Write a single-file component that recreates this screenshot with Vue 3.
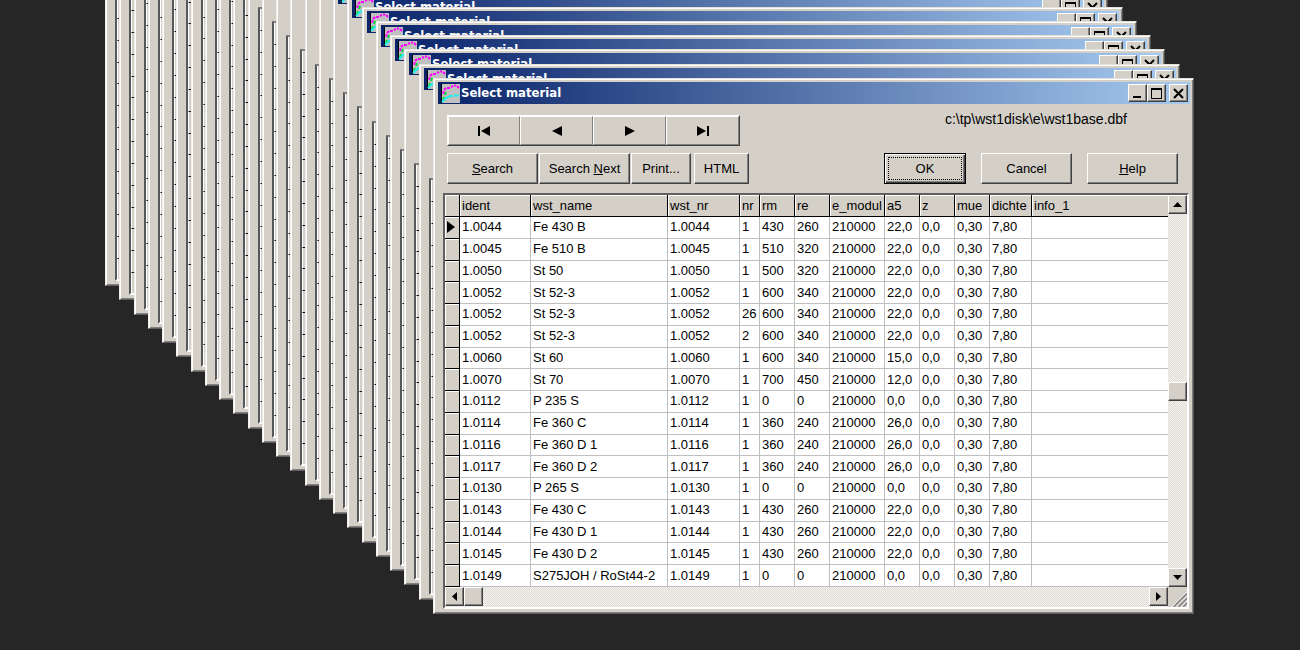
<script setup>
const STEP = 14.26
const cascade = Array.from({ length: 24 }, (_, i) => {
  const depth = 23 - i
  return { depth, shift: -Math.round(depth * STEP) }
})

const columns = [
  { key: 'ident', cls: 'c-ident' },
  { key: 'wst_name', cls: 'c-name' },
  { key: 'wst_nr', cls: 'c-wstnr' },
  { key: 'nr', cls: 'c-nr' },
  { key: 'rm', cls: 'c-num' },
  { key: 're', cls: 'c-num' },
  { key: 'e_modul', cls: 'c-modul' },
  { key: 'a5', cls: 'c-num' },
  { key: 'z', cls: 'c-num' },
  { key: 'mue', cls: 'c-num' },
  { key: 'dichte', cls: 'c-dichte' },
  { key: 'info_1', cls: 'c-info' },
]

const rows = [
  ['1.0044', 'Fe 430 B', '1', '430', '260', '22,0'],
  ['1.0045', 'Fe 510 B', '1', '510', '320', '22,0'],
  ['1.0050', 'St 50', '1', '500', '320', '22,0'],
  ['1.0052', 'St 52-3', '1', '600', '340', '22,0'],
  ['1.0052', 'St 52-3', '26', '600', '340', '22,0'],
  ['1.0052', 'St 52-3', '2', '600', '340', '22,0'],
  ['1.0060', 'St 60', '1', '600', '340', '15,0'],
  ['1.0070', 'St 70', '1', '700', '450', '12,0'],
  ['1.0112', 'P 235 S', '1', '0', '0', '0,0'],
  ['1.0114', 'Fe 360 C', '1', '360', '240', '26,0'],
  ['1.0116', 'Fe 360 D 1', '1', '360', '240', '26,0'],
  ['1.0117', 'Fe 360 D 2', '1', '360', '240', '26,0'],
  ['1.0130', 'P 265 S', '1', '0', '0', '0,0'],
  ['1.0143', 'Fe 430 C', '1', '430', '260', '22,0'],
  ['1.0144', 'Fe 430 D 1', '1', '430', '260', '22,0'],
  ['1.0145', 'Fe 430 D 2', '1', '430', '260', '22,0'],
  ['1.0149', 'S275JOH / RoSt44-2', '1', '0', '0', '0,0'],
].map(([id, name, nr, rm, re, a5]) => [id, name, id, nr, rm, re, '210000', a5, '0,0', '0,30', '7,80', ''])
</script>

<template>
  <main class="desktop">
    <div class="stack">
      <section
        v-for="w in cascade"
        :key="w.depth"
        class="window"
        :class="w.depth ? 'rear' : 'front'"
        :style="{ transform: `translate(${w.shift}px, ${w.shift}px)` }"
      >
        <header class="titlebar">
          <svg v-if="w.depth < 8" class="app-icon" viewBox="0 0 19 19" aria-hidden="true">
            <rect width="19" height="19" fill="#c0c0c0" />
            <path d="M0.5 0V19" stroke="#000" />
            <path d="M2.500 10V7M3 6L5 4M6 4H9M10 3L12 2M13 1.500H15M16 2L18 4" stroke="#f0f" stroke-width="2" fill="none" />
            <path d="M2 16L3 13M4 11L5 8" stroke="#0d3" stroke-width="2" fill="none" />
            <path d="M1 18L5 14L9 12H12M13 11.500H18" stroke="#2ee" stroke-width="2" fill="none" />
          </svg>
          <template v-if="w.depth < 7">
            <span class="title">Select material</span>
            <button class="cap" type="button" aria-label="Minimize">
              <svg viewBox="0 0 17 17"><path d="M4 12H12" stroke="#000" stroke-width="2" /></svg>
            </button>
            <button class="cap" type="button" aria-label="Maximize">
              <svg viewBox="0 0 17 17"><path d="M3 4H14M3.500 3V14M13.500 3V14M3 13.500H14" stroke="#000" fill="none" /><path d="M3 4H14" stroke="#000" stroke-width="2" /></svg>
            </button>
            <button class="cap close" type="button" aria-label="Close">
              <svg viewBox="0 0 17 17"><path d="M4 4L13 13M13 4L4 13" stroke="#000" stroke-width="2" /></svg>
            </button>
          </template>
        </header>

        <div v-if="w.depth" class="strip"><i v-for="n in 19" :key="n"></i></div>

        <div v-else class="body">
          <div class="row top-row">
            <nav class="navigator" aria-label="Records">
              <button type="button" aria-label="First"><svg viewBox="0 0 14 10"><path d="M1 0H3V10H1ZM13 0V10L4 5Z" /></svg></button>
              <button type="button" aria-label="Previous"><svg viewBox="0 0 14 10"><path d="M12 0V10L2 5Z" /></svg></button>
              <button type="button" aria-label="Next"><svg viewBox="0 0 14 10"><path d="M2 0V10L12 5Z" /></svg></button>
              <button type="button" aria-label="Last"><svg viewBox="0 0 14 10"><path d="M1 0V10L10 5ZM11 0H13V10H11Z" /></svg></button>
            </nav>
            <span class="path">c:\tp\wst1disk\e\wst1base.dbf</span>
          </div>

          <div class="row buttons">
            <button class="btn wide" type="button"><span><u>S</u>earch</span></button>
            <button class="btn wide" type="button"><span>Search <u>N</u>ext</span></button>
            <button class="btn print" type="button">Print...</button>
            <button class="btn html" type="button">HTML</button>
            <div class="dialog-buttons">
              <button class="btn ok" type="button"><span class="focus">OK</span></button>
              <button class="btn wide" type="button">Cancel</button>
              <button class="btn wide" type="button"><span><u>H</u>elp</span></button>
            </div>
          </div>

          <div class="grid">
            <table>
              <thead>
                <tr>
                  <th class="ind" aria-label="Current record"></th>
                  <th v-for="c in columns" :key="c.key" :class="c.cls" scope="col">{{ c.key }}</th>
                </tr>
              </thead>
              <tbody>
                <tr v-for="(r, i) in rows" :key="i">
                  <td class="ind"><svg v-if="i === 0" viewBox="0 0 8 12"><path d="M0 0V12L8 6Z" /></svg></td>
                  <td v-for="(v, j) in r" :key="j">{{ v }}</td>
                </tr>
              </tbody>
            </table>
            <div class="scroll vertical">
              <button type="button" aria-label="Scroll up"><svg viewBox="0 0 9 9"><path d="M0 7H9L4.500 2Z" /></svg></button>
              <div class="space"></div>
              <div class="thumb"></div>
              <div class="space"></div>
              <button type="button" aria-label="Scroll down"><svg viewBox="0 0 9 9"><path d="M0 2H9L4.500 7Z" /></svg></button>
            </div>
            <div class="scroll horizontal">
              <button type="button" aria-label="Scroll left"><svg viewBox="0 0 9 9"><path d="M7 0V9L2 4.500Z" /></svg></button>
              <div class="thumb"></div>
              <div class="space"></div>
              <button type="button" aria-label="Scroll right"><svg viewBox="0 0 9 9"><path d="M2 0V9L7 4.500Z" /></svg></button>
            </div>
            <svg class="grip" viewBox="0 0 20 20" aria-hidden="true">
              <path d="M6 20L20 6M11 20L20 11M16 20L20 16" stroke="#808080" stroke-width="2" />
              <path d="M4.500 20L20 4.500M9.500 20L20 9.500M14.500 20L20 14.500" stroke="#fff" />
            </svg>
          </div>
        </div>
      </section>
    </div>
  </main>
</template>

<style>
html,
body {
  background: #262626;
}
</style>

<style scoped>
* {
  box-sizing: border-box;
}
.desktop {
  min-height: 100vh;
  padding: 78px 106px 36px 433px;
  overflow: hidden;
  background: #262626;
  color: #000;
  font: 13px/16px "Liberation Sans", Arial, sans-serif;
}
.stack {
  position: relative;
}
.window {
  display: flex;
  flex-direction: column;
  padding: 2px 2px 3px 3px;
  background: #d4d0c8;
  border: 1px solid;
  border-color: #e4e1da #505050 #606060 #f0eeea;
  box-shadow: inset 1px 1px 0 #fff, inset -1px -1px 0 #808080;
}
.front {
  position: relative;
}
.rear {
  position: absolute;
  inset: 0;
}
.titlebar {
  display: flex;
  align-items: center;
  flex: none;
  height: 22px;
  margin: 1px 1px 0;
  padding: 0 2px 0 3px;
  background: linear-gradient(90deg, #0a246a, #a6caf0);
}
.app-icon {
  width: 19px;
  height: 19px;
}
.title {
  flex: 1;
  padding-left: 1px;
  color: #fff;
  font: bold 13px/18px "DejaVu Sans Condensed", "DejaVu Sans", sans-serif;
  white-space: nowrap;
}
button {
  display: flex;
  align-items: center;
  justify-content: center;
  padding: 0;
  background: #d4d0c8;
  border: 1px solid;
  border-color: #fff #404040 #404040 #fff;
  border-radius: 0;
  box-shadow: inset -1px -1px 0 #808080;
  color: #000;
  font: inherit;
}
.cap {
  width: 19px;
  height: 18px;
}
.cap svg {
  width: 17px;
  height: 17px;
}
.close {
  margin-left: 3px;
}
.strip {
  display: grid;
  flex: 1;
  grid-template-rows: repeat(18, 1fr) 20px;
  margin: 88px 3px 1px 6px;
  border: 2px solid;
  border-color: #808080 #fff #fff #55585a;
  background: #d4d0c8;
}
.strip i {
  border-bottom: 1px solid #111;
  border-left: 1px solid #fff;
}
.strip i:last-child {
  border-bottom: 0;
}
.body {
  padding: 11px 2px 1px 6px;
}
.row {
  display: flex;
}
.top-row {
  justify-content: space-between;
  align-items: flex-start;
  padding: 0 62px 0 4px;
}
.navigator {
  display: flex;
  border: 1px solid;
  border-color: #fff #404040 #404040 #fff;
}
.navigator button {
  width: 73px;
  height: 29px;
  border-color: #fff #808080 #808080 #fff;
  box-shadow: none;
}
.navigator button:first-child {
  width: 72px;
}
.navigator svg {
  width: 14px;
  height: 10px;
}
.path {
  margin-top: -4px;
  font-size: 14px;
}
.buttons {
  margin-top: 7px;
  padding: 0 11px 0 4px;
}
.btn {
  height: 31px;
}
.wide {
  width: 91px;
}
.buttons > .wide + .wide {
  margin-left: 1px;
}
.print {
  width: 60px;
  margin-left: 1px;
}
.html {
  width: 55px;
  margin-left: 3px;
}
.dialog-buttons {
  display: flex;
  gap: 15px;
  margin-left: auto;
}
.ok {
  width: 82px;
  padding: 3px;
  border-color: #000;
  box-shadow: inset 1px 1px 0 #fff, inset -1px -1px 0 #404040, inset -2px -2px 0 #808080;
}
.focus {
  flex: 1;
  align-self: stretch;
  display: flex;
  align-items: center;
  justify-content: center;
  border: 1px dotted #000;
}
.grid {
  display: grid;
  grid-template-columns: 1fr 19px;
  grid-template-rows: auto 20px;
  margin-top: 9px;
  border: 2px solid;
  border-color: #606060 #fff #fff #606060;
}
table {
  width: 100%;
  height: 392px;
  table-layout: fixed;
  border-collapse: separate;
  border-spacing: 0;
  background: #fff;
}
th,
td {
  padding: 0 0 0 2px;
  border-right: 1px solid #c0c0c0;
  border-bottom: 1px solid #c0c0c0;
  font-weight: normal;
  text-align: left;
  white-space: nowrap;
  overflow: hidden;
}
th {
  height: 22px;
  background: #d4d0c8;
  border-color: #000;
  box-shadow: inset 1px 1px 0 #fff;
}
th:last-child,
td:last-child {
  border-right: 0;
}
.ind {
  width: 15px;
  background: #d4d0c8;
  border-color: #000;
  box-shadow: inset 1px 1px 0 #fff;
}
.ind svg {
  display: block;
  width: 8px;
  height: 12px;
}
.c-ident { width: 71px; }
.c-name { width: 137px; }
.c-wstnr { width: 72px; }
.c-nr { width: 20px; }
.c-num { width: 35px; }
.c-modul { width: 55px; }
.c-dichte { width: 42px; }
.scroll {
  display: flex;
  background: repeating-conic-gradient(#f4f2ef 0 25%, #dfdcd6 0 50%) 0 0 / 2px 2px;
}
.vertical {
  flex-direction: column;
}
.scroll button,
.thumb {
  flex: none;
  width: 19px;
  height: 19px;
}
.thumb {
  background: #d4d0c8;
  border: 1px solid;
  border-color: #fff #404040 #404040 #fff;
  box-shadow: inset -1px -1px 0 #808080;
}
.scroll svg {
  width: 9px;
  height: 9px;
}
.space {
  flex: 1;
}
.grip {
  width: 19px;
  height: 20px;
}
</style>
